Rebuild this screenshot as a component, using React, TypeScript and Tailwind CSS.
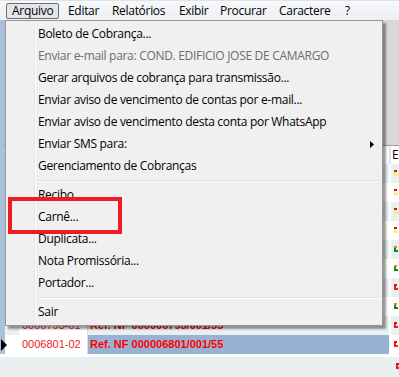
type Entry =
  | { kind: 'item'; label: string; disabled?: boolean; submenu?: boolean }
  | { kind: 'sep' };

const entries: Entry[] = [
  { kind: 'item', label: 'Boleto de Cobrança...' },
  { kind: 'item', label: 'Enviar e-mail para: COND. EDIFICIO JOSE DE CAMARGO', disabled: true },
  { kind: 'item', label: 'Gerar arquivos de cobrança para transmissão...' },
  { kind: 'item', label: 'Enviar aviso de vencimento de contas por e-mail...' },
  { kind: 'item', label: 'Enviar aviso de vencimento desta conta por WhatsApp' },
  { kind: 'item', label: 'Enviar SMS para:', submenu: true },
  { kind: 'item', label: 'Gerenciamento de Cobranças' },
  { kind: 'sep' },
  { kind: 'item', label: 'Recibo' },
  { kind: 'item', label: 'Carnê...' },
  { kind: 'item', label: 'Duplicata...' },
  { kind: 'item', label: 'Nota Promissória...' },
  { kind: 'item', label: 'Portador...' },
  { kind: 'sep' },
  { kind: 'item', label: 'Sair' },
];

// widths pin each title where the original menu bar has it
const menus = [
  { label: 'Arquivo', w: 'w-[53px]' },
  { label: 'Editar', w: 'w-[44px]' },
  { label: 'Relatórios', w: 'w-[67px]' },
  { label: 'Exibir', w: 'w-[41px]' },
  { label: 'Procurar', w: 'w-[59px]' },
  { label: 'Caractere', w: 'w-[66px]' },
  { label: '?', w: 'w-[20px]' },
];

type Status = 'warn' | 'ok' | 'late';
const rows: { status: Status; code?: string; ref?: string }[] = [
  { status: 'warn' },
  { status: 'warn' },
  { status: 'warn' },
  { status: 'warn' },
  { status: 'ok' },
  { status: 'ok' },
  { status: 'late' },
  { status: 'ok' },
  { status: 'late', code: '0006793-01', ref: 'Ref. NF 000006793/001/55' },
  { status: 'late', code: '0006801-02', ref: 'Ref. NF 000006801/001/55' },
];

function StatusIcon({ status }: { status: Status }) {
  const top = status === 'ok' ? '#e08a00' : '#e81010';
  const body = status === 'warn' ? '#f4f06a' : status === 'ok' ? '#118a11' : '#f02020';
  return (
    <svg width="8" height="10" viewBox="0 0 8 10" className="ml-[3px] shrink-0">
      <rect x="0" y="1" width="3" height="2" fill={top} />
      <rect x="0" y="3" width="2" height="2" fill={body} />
      <rect x="0" y="5" width="4" height="2" fill={body} />
    </svg>
  );
}

export default function App() {
  return (
    <div className="relative w-[399px] h-[377px] overflow-hidden bg-[#f0f0f0] flex flex-col font-['Open_Sans',sans-serif] text-[12px] tracking-[-0.3px] text-black">
      {/* menu bar */}
      <div className="h-[20px] shrink-0 flex items-center pl-[6px] border-t border-[#dfe3e8] bg-gradient-to-b from-[#f7f8fa] to-[#eceff3]">
        {menus.map((m, i) => (
          <div
            key={m.label}
            className={`${m.w} h-[16px] flex items-center leading-none ${
              i === 0 ? 'border border-[#6f6f6f] rounded-[2px] bg-[#e3e5e8] pl-[5px] mr-[3px]' : 'pl-[6px]'
            }`}
          >
            {m.label}
          </div>
        ))}
      </div>

      {/* grid behind */}
      <div className="flex-1 flex flex-col font-['Liberation_Sans',sans-serif] text-[11px] tracking-normal">
        <div className="h-[125px] shrink-0 bg-[#d9d9d9] border-l-[5px] border-[#a9c1da]" />
        <div className="h-[19px] shrink-0 flex bg-white border-t border-[#a0a0a0] border-l-[5px] border-l-[#a9c1da]">
          <div className="w-[386px] shrink-0 border-r-2 border-[#e4e4e4]" />
          <div className="flex items-center pl-[1px] font-['Open_Sans',sans-serif] text-[12px]">E</div>
        </div>
        {rows.map((r, i) => {
          const selected = i === 9;
          const bg = i % 2 === 0 ? 'bg-[#e8f0f0]' : 'bg-white';
          return (
            <div key={i} className={`h-[19px] shrink-0 flex ${bg}`}>
              <div className="w-[19px] shrink-0 flex items-center bg-[linear-gradient(to_right,#a9c1da_5px,transparent_5px)]">
                {selected && (
                  <svg width="7" height="12" viewBox="0 0 7 12" className="ml-[1px]">
                    <polygon points="0,0 6,6 0,12" fill="#000" />
                  </svg>
                )}
              </div>
              <div className="w-[69px] shrink-0 flex items-center pl-[3px] text-[#ee1c24] border-r border-[#dcdcdc] bg-white">
                {r.code}
              </div>
              <div
                className={`w-[303px] shrink-0 flex items-center pl-[2px] text-[#ff0000] font-bold border-r-2 border-white ${
                  selected ? 'bg-[#97b2d2]' : ''
                }`}
              >
                {r.ref}
              </div>
              <div className="flex-1 flex items-center overflow-hidden">
                <StatusIcon status={r.status} />
              </div>
            </div>
          );
        })}
        <div className="flex-1 flex bg-[#eaf0f0] border-t-[3px] border-white">
          <div className="w-[393px] shrink-0" />
          <div className="flex-1 flex items-center overflow-hidden">
            <StatusIcon status="late" />
          </div>
        </div>
      </div>

      {/* dropdown */}
      <div className="absolute left-[5px] top-[20px] w-[378px] bg-[#f0f0f0] border border-[#979797] shadow-[3px_3px_2px_rgba(0,0,0,0.4)] flex py-[2px]">
        <div className="w-[29px] shrink-0 border-r border-[#e2e3e3]" />
        <div className="flex-1 flex flex-col border-l border-white">
          {entries.map((e, i) =>
            e.kind === 'sep' ? (
              <div key={i} className="h-[7px] pt-[3px] pr-[2px]">
                <div className="h-[2px] border-t border-[#e0e0e0] border-b border-b-white" />
              </div>
            ) : (
              <div
                key={i}
                className={`h-[22px] flex items-center pl-[2px] pr-[8px] whitespace-nowrap ${
                  e.disabled ? 'text-[#6d6d6d]' : 'text-black'
                }`}
              >
                <span className="flex-1">{e.label}</span>
                {e.submenu && (
                  <svg width="4" height="7" viewBox="0 0 4 7">
                    <polygon points="0,0 4,3.5 0,7" fill="#000" />
                  </svg>
                )}
              </div>
            )
          )}
        </div>
      </div>

      {/* highlight */}
      <div className="absolute left-[8px] top-[197px] w-[114px] h-[37px] border-4 border-[#ed1c24]" />
    </div>
  );
}
